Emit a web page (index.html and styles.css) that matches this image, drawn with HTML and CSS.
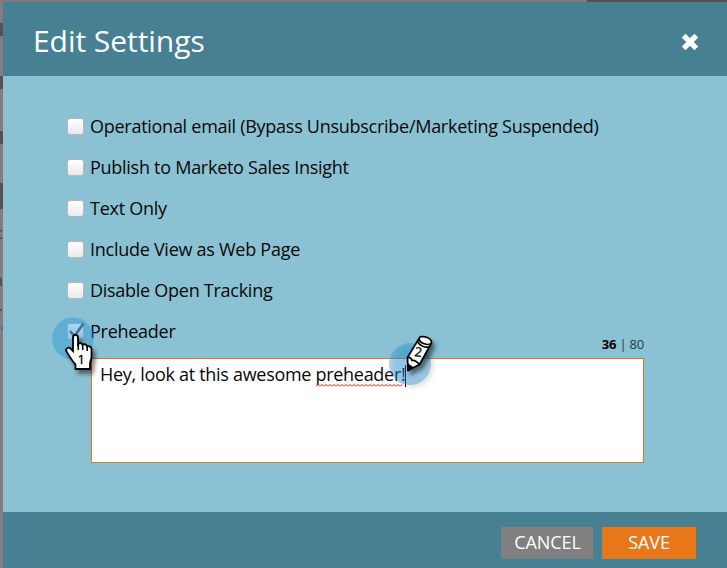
FILE: index.html
```html
<!DOCTYPE html>
<html lang="en">
<head>
<meta charset="utf-8">
<title>Edit Settings</title>
<link rel="stylesheet" href="styles.css">
</head>
<body>
<div class="page">
  <div class="backdrop" aria-hidden="true">
    <span class="frag frag-c">c</span>
    <span class="frag frag-n">n</span>
    <span class="frag frag-dot">.</span>
    <span class="frag frag-link"></span>
  </div>
  <section class="dialog">
    <header class="header">
      <h1>Edit Settings</h1>
      <svg class="close" width="20" height="20" viewBox="0 0 20 20"><path d="M3.700 3.700 16.300 16.300M16.300 3.700 3.700 16.300" stroke="#fff" stroke-width="5.400"/></svg>
    </header>
    <main class="body">
      <div class="option"><i class="box"></i><span>Operational email (Bypass Unsubscribe/Marketing Suspended)</span></div>
      <div class="option"><i class="box"></i><span>Publish to Marketo Sales Insight</span></div>
      <div class="option"><i class="box"></i><span>Text Only</span></div>
      <div class="option"><i class="box"></i><span>Include View as Web Page</span></div>
      <div class="option"><i class="box"></i><span>Disable Open Tracking</span></div>
      <div class="option"><i class="box"></i><span>Preheader</span>
        <div class="count"><b>36</b> | 80</div>
      </div>
      <div class="field"><span>Hey, look at this awesome </span><span class="typo">preheader<svg class="wave" width="86" height="3" viewBox="0 0 86 3"><defs><pattern id="w" width="4" height="3" patternUnits="userSpaceOnUse"><path d="M0 2.5 2 .5 4 2.5" fill="none" stroke="#f00" stroke-width="1"/></pattern></defs><rect width="86" height="3" fill="url(#w)"/></svg></span><span>!</span><i class="caret"></i></div>
    </main>
    <footer class="footer">
      <button class="btn cancel">CANCEL</button>
      <button class="btn save">SAVE</button>
    </footer>
  </section>
  <svg class="marker marker-one" width="60" height="70" viewBox="45 310 60 70">
    <circle cx="73" cy="338.5" r="21" fill="#1f93d9" fill-opacity=".4"/>
    <path d="M70 331l4.500 5 9-12.500" fill="none" stroke="#416f91" stroke-width="2.500"/>
    <path class="shadow" d="M73 351V337.500c0-3.600 5-3.600 5 0v7c1.500-2 4-1.500 4.500.5 2-1.500 4-.5 4.500 1.500 2-.8 4.500.2 4.500 2.500v7.500c0 3-1.500 5-1.500 7v5.500H75.500v-4.500c-3-3-6.500-9-9-13-1.500-3 2-5 4-3z" fill="#fff" stroke="#000" stroke-width="1.800"/>
    <path d="M78.300 344v6M82.700 345.500v4.500M87.200 347v4" stroke="#000" stroke-width="1.500" fill="none"/>
    <text class="number" x="77.500" y="363.500">1</text>
  </svg>
  <svg class="marker marker-two" width="60" height="65" viewBox="385 330 60 65">
    <circle class="halo" cx="410" cy="364" r="21" fill="#1f93d9" fill-opacity=".4"/>
    <g class="shadow" stroke="#000" stroke-width="1.700" stroke-linejoin="round">
      <path d="M408 370.500 407.500 357.500 419 338.500c1-4 13-1.500 12.500 4.500L419.500 364.500z" fill="#fff"/>
      <path d="M408 370.500v-6l4.500 3z" fill="#000"/>
      <path d="M407.500 357.500c3-.5 4 1 4.500 3 3-1 5 1 7.500 4M419 339c1 4 9 7.500 12.500 4M417.500 341.500c2 4 8 7 12 5" fill="none"/>
    </g>
    <text class="number" x="414.500" y="356.500" transform="rotate(8 418 352)">2</text>
  </svg>
</div>
</body>
</html>
```
FILE: styles.css
```css
* { box-sizing: border-box; }
body { margin: 0; font-family: "Open Sans", sans-serif; color: #080808; }
.page { position: relative; width: 727px; height: 568px; overflow: hidden; padding: 2px 0 0 3px; background: linear-gradient(90deg, #7f7c80 587px, #545155 587px); }
.backdrop { position: absolute; left: 0; top: 2px; width: 3px; height: 566px; overflow: hidden; background: linear-gradient(#827d82 0 21px, #555257 21px 34px, #827d82 34px 74px, #555257 74px 87px, #827d82 87px 129px, #555257 129px 142px, #827d82 142px 181px, #555257 181px 207px, #827d82 207px); }
.frag { position: absolute; right: 0; font-size: 17px; line-height: 20px; color: #444; }
.frag-c { top: 221px; }
.frag-n { top: 268px; }
.frag-dot { top: 293px; }
.frag-link { top: 325px; width: 2px; height: 3px; background: #496f92; }
.dialog { position: relative; display: flex; flex-direction: column; height: 566px; background: #8ac2d3; }
.header { display: flex; align-items: center; justify-content: space-between; height: 74px; padding: 0 27px 0 30px; background: #468092; color: #fff; }
h1 { margin: 0; padding-top: 3px; font-size: 30px; font-weight: 400; line-height: 40px; letter-spacing: -.05px; }
.close { display: block; margin-top: 6px; }
.body { flex: 1; padding: 30px 83px 0 64px; }
.option { display: flex; align-items: center; height: 41px; font-size: 18px; line-height: 26px; letter-spacing: -.27px; white-space: nowrap; }
.option > span { margin-top: -2px; }
.box { width: 17px; height: 17px; margin-right: 6px; border: 1px solid #b5b9bc; border-radius: 3px; background: linear-gradient(#fff, #eaeaea); }
.count { margin: 25px 0 0 auto; font-size: 13px; line-height: 18px; letter-spacing: -.2px; color: #243c44; }
.count b { color: #000; }
.field { width: 553px; height: 105px; margin: 6px 0 0 24px; padding: 2px 8px; border: 1px solid #e27521; background: #fff; font-size: 18px; line-height: 26px; letter-spacing: -.3px; white-space: pre; }
.typo { position: relative; }
.wave { position: absolute; left: 0; bottom: -1px; }
.caret { display: inline-block; width: 1px; height: 22px; background: #000; vertical-align: -6px; }
.footer { display: flex; justify-content: flex-end; gap: 9px; height: 56px; padding: 15px 31px 0 0; background: #468092; }
.btn { height: 32px; padding: 0 0 2px; border: 0; color: #fff; font: 18px/30px "Open Sans", sans-serif; letter-spacing: -.1px; }
.cancel { width: 92px; padding-left: 1px; background: #808080; }
.save { width: 94px; background: #e77719; }
.marker { position: absolute; overflow: visible; }
.marker-one { left: 45px; top: 310px; }
.marker-two { left: 385px; top: 330px; }
.halo { filter: drop-shadow(3px 3px 2px rgba(0, 0, 0, .25)); }
.shadow { filter: drop-shadow(3px 4px 2px rgba(0, 0, 0, .5)); }
.number { font: 13px "Open Sans", sans-serif; fill: #000; stroke: #000; stroke-width: .3px; }
```
